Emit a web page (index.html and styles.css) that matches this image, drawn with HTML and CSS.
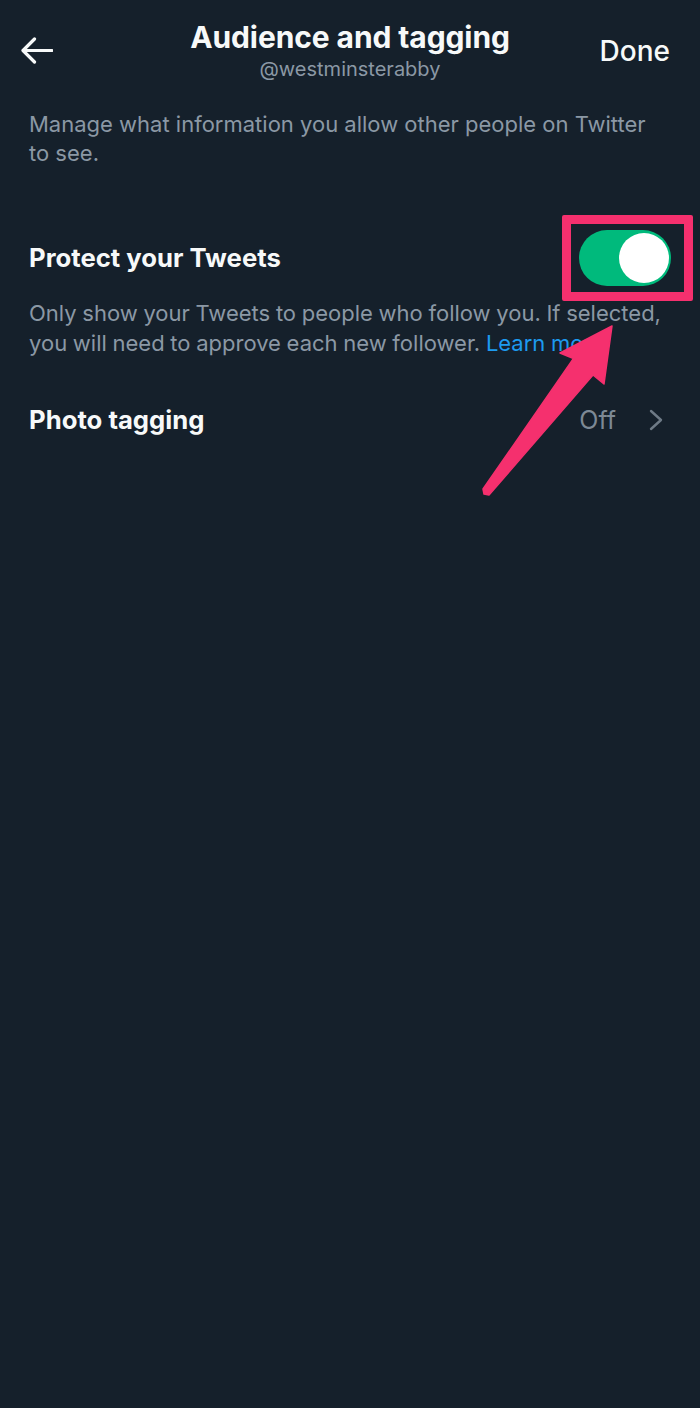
FILE: index.html
```html
<!DOCTYPE html>
<html lang="en">
<head>
<meta charset="utf-8">
<title>Audience and tagging</title>
<link rel="stylesheet" href="styles.css">
</head>
<body>
<div class="screen">
  <header class="topbar">
    <div class="back">
      <svg width="32" height="28" viewBox="0 0 32 28" aria-hidden="true">
        <path d="M31 13.5H2.5M13.5 2L2 13.5L13.5 25" fill="none" stroke="#f7f9f9" stroke-width="3.2" stroke-linecap="round" stroke-linejoin="round"/>
      </svg>
    </div>
    <div class="titles">
      <div class="title">Audience and tagging</div>
      <div class="handle">@westminsterabby</div>
    </div>
    <div class="done">Done</div>
  </header>

  <p class="intro">Manage what information you allow other people on Twitter to see.</p>

  <section class="setting">
    <div class="row">
      <div class="label">Protect your Tweets</div>
      <div class="toggle">
        <span class="knob"></span>
        <span class="highlight"></span>
      </div>
    </div>
    <p class="desc">Only show your Tweets to people who follow you. If selected, you will need to approve each new follower. <span class="link">Learn more</span></p>
  </section>

  <section class="row row-nav">
    <div class="label">Photo tagging</div>
    <div class="value">
      <span class="off">Off</span>
      <svg width="14" height="22" viewBox="0 0 14 22" aria-hidden="true">
        <path d="M2 2L12 11L2 20" fill="none" stroke="#6e7a86" stroke-width="2.4" stroke-linecap="round" stroke-linejoin="round"/>
      </svg>
    </div>
  </section>

  <svg class="pointer" width="700" height="1408" viewBox="0 0 700 1408" aria-hidden="true">
    <polygon points="612,326 560,353 573.5,358.5 483,489 484,494 489,495 593,375 604,384" fill="#f5306e" stroke="#f5306e" stroke-width="1.5" stroke-linejoin="round"/>
  </svg>
</div>
</body>
</html>
```

FILE: styles.css
```css
html, body {
  margin: 0;
  padding: 0;
  background: #15202b;
}

.screen {
  position: relative;
  width: 700px;
  min-height: 1408px;
  background: #15202b;
  font-family: "Inter", "Liberation Sans", sans-serif;
  color: #f7f9f9;
  overflow: hidden;
}

.topbar {
  display: grid;
  grid-template-columns: 1fr auto 1fr;
  align-items: center;
  padding-top: 20px;
}

.back {
  justify-self: start;
  padding-left: 21px;
  display: flex;
  padding-top: 1px;
}

.titles {
  display: flex;
  flex-direction: column;
  align-items: center;
  gap: 4px;
}

.title {
  font-size: 30px;
  line-height: 34px;
  font-weight: 700;
  letter-spacing: -0.1px;
}

.handle {
  font-size: 20px;
  line-height: 22px;
  color: #8b98a5;
}

.done {
  justify-self: end;
  padding-right: 30px;
  font-size: 28px;
  line-height: 34px;
  font-weight: 500;
  padding-top: 2px;
}

.intro {
  margin: 30px 0 0;
  padding: 0 29px;
  font-size: 22px;
  line-height: 29px;
  color: #8b98a5;
}

.setting {
  margin-top: 62px;
}

.row {
  display: flex;
  align-items: center;
  justify-content: space-between;
  padding: 0 29px;
}

.label {
  font-size: 25.7px;
  line-height: 30px;
  font-weight: 700;
}

.toggle {
  position: relative;
  width: 92px;
  height: 56px;
  border-radius: 28px;
  background: #00ba7c;
}

.knob {
  position: absolute;
  right: 2px;
  top: 3px;
  width: 50px;
  height: 50px;
  border-radius: 50%;
  background: #ffffff;
}

.highlight {
  position: absolute;
  left: -17px;
  right: -22px;
  top: -15px;
  bottom: -15px;
  border: 9px solid #f5306e;
  border-radius: 2px;
}

.desc {
  margin: 12px 0 0;
  padding: 0 29px;
  font-size: 22px;
  line-height: 30px;
  color: #8b98a5;
  word-spacing: -0.5px;
}

.link {
  color: #1d9bf0;
}

.row-nav {
  margin-top: 47px;
  padding-right: 37px;
}

.value {
  display: flex;
  align-items: center;
  gap: 33px;
}

.off {
  font-size: 25px;
  line-height: 30px;
  color: #7d8995;
}

.value svg {
  display: block;
}

.pointer {
  position: absolute;
  left: 0;
  top: 0;
}
```
